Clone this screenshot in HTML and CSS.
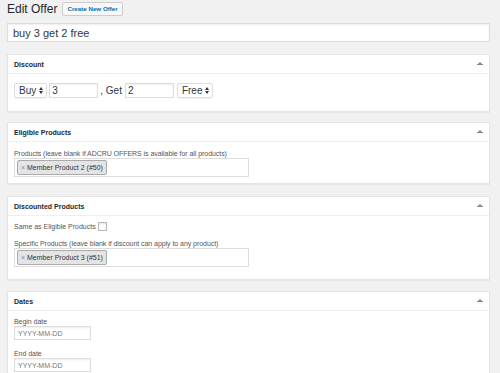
FILE: index.html
```html
<!DOCTYPE html>
<html lang="en">
<head>
    <meta charset="UTF-8">
    <meta name="viewport" content="width=device-width, initial-scale=1.0">
    <title>Edit Offer</title>
    <link rel="stylesheet" href="styles.css">
</head>
<body>
    <div class="wrap">
        <!-- page title -->
        <div class="page-head">
            <h1>Edit Offer</h1>
            <a class="add-new" href="#">Create New Offer</a>
        </div>

        <input type="text" class="title-input" value="buy 3 get 2 free">

        <!-- Discount -->
        <div class="postbox discount">
            <div class="postbox-head">
                <h2>Discount</h2>
                <span class="toggle"></span>
            </div>
            <div class="inside discount-row">
                <span class="fake-select">Buy <span class="arrows"></span></span>
                <input type="text" class="num" value="3">
                <span class="get">, Get</span>
                <input type="text" class="num" value="2">
                <span class="fake-select free">Free <span class="arrows"></span></span>
            </div>
        </div>

        <!-- Eligible products -->
        <div class="postbox eligible">
            <div class="postbox-head">
                <h2>Eligible Products</h2>
                <span class="toggle"></span>
            </div>
            <div class="inside">
                <label class="field-label">Products (leave blank if ADCRU OFFERS is available for all products)</label>
                <div class="multi">
                    <span class="tag"><span class="x">×</span> Member Product 2 (#50)</span>
                </div>
            </div>
        </div>

        <!-- Discounted products -->
        <div class="postbox discounted">
            <div class="postbox-head">
                <h2>Discounted Products</h2>
                <span class="toggle"></span>
            </div>
            <div class="inside">
                <label class="check-label">Same as Eligible Products <span class="checkbox"></span></label>
                <label class="field-label">Specific Products (leave blank if discount can apply to any product)</label>
                <div class="multi">
                    <span class="tag"><span class="x">×</span> Member Product 3 (#51)</span>
                </div>
            </div>
        </div>

        <!-- Dates -->
        <div class="postbox dates">
            <div class="postbox-head">
                <h2>Dates</h2>
                <span class="toggle"></span>
            </div>
            <div class="inside">
                <label class="field-label">Begin date</label>
                <input type="text" class="date" placeholder="YYYY-MM-DD">
                <label class="field-label end">End date</label>
                <input type="text" class="date" placeholder="YYYY-MM-DD">
            </div>
        </div>
    </div>
</body>
</html>
```

FILE: styles.css
```css
body {
    margin: 0;
    background: #f1f1f1;
    font-family: "Liberation Sans", Arial, sans-serif;
    color: #23282d;
}

.wrap {
    padding: 0 10px 0 7px;
}

.page-head {
    display: flex;
    align-items: center;
    height: 18px;
}

h1 {
    font-size: 12px;
    font-weight: 400;
    margin: 0 5px 0 0;
    line-height: 16px;
}

.add-new {
    font-size: 6.2px;
    font-weight: 700;
    color: #0073aa;
    text-decoration: none;
    background: #f7f7f7;
    border: 1px solid #ccc;
    border-radius: 2px;
    padding: 2px 4px;
    line-height: 8px;
}

.title-input {
    display: block;
    box-sizing: border-box;
    width: 100%;
    height: 19px;
    margin: 5px 0 12px;
    padding: 0 5px;
    border: 1px solid #ddd;
    box-shadow: inset 0 1px 2px rgba(0, 0, 0, 0.07);
    font-family: inherit;
    font-size: 11px;
    color: #32373c;
    background: #fff;
}

.postbox {
    background: #fff;
    border: 1px solid #e5e5e5;
    box-shadow: 0 1px 1px rgba(0, 0, 0, 0.04);
    margin-bottom: 11px;
}

.postbox.discount {
    margin-bottom: 10px;
}

.postbox.eligible {
    margin-bottom: 12px;
}

.postbox-head {
    display: flex;
    justify-content: space-between;
    align-items: center;
    height: 18px;
    padding: 0 6px 0 6px;
    border-bottom: 1px solid #eee;
}

h2 {
    font-size: 7px;
    font-weight: 700;
    margin: 0;
}

.toggle {
    width: 0;
    height: 0;
    border-left: 2px solid transparent;
    border-right: 2px solid transparent;
    border-bottom: 2px solid #82878c;
    position: relative;
    top: -1px;
    margin-right: 1px;
}

.toggle::after {
    content: "";
    position: absolute;
    left: -3px;
    top: 2px;
    width: 6px;
    height: 1px;
    background: #82878c;
}

.inside {
    padding: 7px 6px 6px;
    font-size: 7px;
    color: #555;
}

.discount-row {
    display: flex;
    align-items: center;
    height: 15px;
    padding: 9px 6px 13px;
    font-size: 10px;
    color: #32373c;
}

.fake-select {
    display: inline-flex;
    align-items: center;
    height: 15px;
    box-sizing: border-box;
    border: 1px solid #ddd;
    border-radius: 2px;
    padding: 0 3px 0 4px;
    margin-right: 2px;
    box-shadow: 0 1px 1px rgba(0, 0, 0, 0.05);
}

.fake-select.free {
    margin-left: 3px;
}

.arrows {
    display: inline-block;
    margin-left: 3px;
    width: 0;
    height: 7px;
    position: relative;
    border-left: 2px solid transparent;
    border-right: 2px solid transparent;
}

.arrows::before,
.arrows::after {
    content: "";
    position: absolute;
    left: -2px;
    border-left: 2px solid transparent;
    border-right: 2px solid transparent;
}

.arrows::before {
    top: 0;
    border-bottom: 3px solid #32373c;
}

.arrows::after {
    bottom: 0;
    border-top: 3px solid #32373c;
}

.num {
    box-sizing: border-box;
    width: 49px;
    height: 15px;
    border: 1px solid #ddd;
    box-shadow: inset 0 1px 2px rgba(0, 0, 0, 0.07);
    padding: 0 2px;
    font-family: inherit;
    font-size: 10px;
    color: #32373c;
}

.get {
    margin: 0 3px 0 2px;
}

.field-label {
    display: block;
    height: 9px;
    line-height: 9px;
    letter-spacing: -0.05px;
}

.multi {
    box-sizing: border-box;
    width: 235px;
    height: 19px;
    border: 1px solid #ddd;
    padding: 1px 2px;
}

.tag {
    display: inline-block;
    height: 15px;
    box-sizing: border-box;
    line-height: 13px;
    padding: 0 3px;
    background: #e4e4e4;
    border: 1px solid #aaa;
    border-radius: 2px;
    font-size: 7px;
    color: #333;
}

.x {
    color: #888;
}

.discounted .inside {
    padding: 6px 6px 12px;
}

.check-label {
    display: flex;
    align-items: center;
    height: 9px;
    margin-bottom: 8px;
}

.checkbox {
    display: inline-block;
    width: 7px;
    height: 7px;
    border: 1px solid #b4b9be;
    margin-left: 2px;
    box-shadow: inset 0 1px 2px rgba(0, 0, 0, 0.1);
}

.dates .inside {
    padding-top: 6px;
}

.date {
    display: block;
    box-sizing: border-box;
    width: 77px;
    height: 14px;
    border: 1px solid #ddd;
    box-shadow: inset 0 1px 2px rgba(0, 0, 0, 0.07);
    padding: 0 3px;
    font-family: inherit;
    font-size: 7px;
}

.date::placeholder {
    color: #72777c;
}

.field-label.end {
    margin-top: 9px;
}
```
